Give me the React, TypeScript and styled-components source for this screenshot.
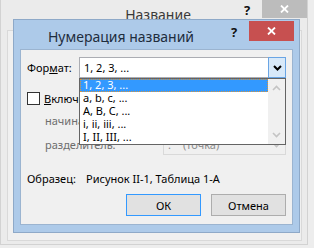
import React from 'react';
import styled, { createGlobalStyle } from 'styled-components';

const GlobalStyle = createGlobalStyle`
  html, body {
    margin: 0;
    padding: 0;
    background: #ededed;
  }
  * {
    box-sizing: border-box;
  }
`;

const Desktop = styled.div`
  position: relative;
  width: 314px;
  height: 248px;
  overflow: hidden;
  background: #ededed;
  font-family: 'Noto Sans', 'Open Sans', sans-serif;
  font-size: 11px;
  color: #000;
`;

// окно "Название" на заднем плане (неактивное)
const ParentWindow = styled.div`
  width: 308px;
  height: 245px;
  display: flex;
  flex-direction: column;
  background: #ebebeb;
  border: 1px solid #d2d2d2;
  border-top: none;
  padding: 0 5px 3px 6px;
`;

const ParentTitleBar = styled.div`
  height: 30px;
  display: grid;
  grid-template-columns: 1fr auto 1fr;
  margin: 0 -5px 0 -6px;
`;

const ParentTitle = styled.div`
  grid-column: 2;
  padding: 5px 0 0 8px;
  font-size: 14px;
  color: #3a3a3a;
`;

const CaptionButtons = styled.div`
  grid-column: 3;
  justify-self: end;
  display: flex;
  align-items: flex-start;
`;

const HelpButton = styled.div<{ $top: number }>`
  width: 30px;
  padding-top: ${p => p.$top}px;
  text-align: center;
  font-size: 13px;
  font-weight: 700;
  line-height: 13px;
  color: #111;
`;

const CloseButton = styled.div<{ $active?: boolean }>`
  width: 45px;
  height: ${p => (p.$active ? 20 : 18)}px;
  margin-top: ${p => (p.$active ? 1 : 0)}px;
  display: flex;
  align-items: center;
  justify-content: center;
  background: ${p => (p.$active ? '#c75050' : '#bcbcbc')};
`;

const ParentClient = styled.div`
  flex: 1;
  background: #f0f0f0;
  border: 1px solid #d9d9d9;
`;

// диалог "Нумерация названий"
const Dialog = styled.div`
  position: absolute;
  left: 13px;
  top: 19px;
  width: 287px;
  height: 214px;
  display: flex;
  flex-direction: column;
  background: #adcae9;
  border: 1px solid #8ea9c8;
  padding: 0 6px 7px;
`;

const DialogTitleBar = styled.div`
  height: 29px;
  display: flex;
  align-items: flex-start;
  margin: 0 -1px 0 -6px;
`;

const DialogTitle = styled.div`
  flex: 1;
  padding: 7px 0 0 9px;
  text-align: center;
  font-size: 14px;
  color: #1f2d3d;
  white-space: nowrap;
`;

const Client = styled.div`
  flex: 1;
  display: flex;
  flex-direction: column;
  background: #f0f0f0;
  border: 1px solid #9bb4d0;
  padding: 7px 6px 8px;
`;

const FieldRow = styled.div<{ $indent?: number; $mt?: number }>`
  display: flex;
  align-items: center;
  height: 21px;
  margin-top: ${p => p.$mt ?? 0}px;
  padding-left: ${p => p.$indent ?? 0}px;
`;

const Label = styled.div<{ $width?: number; $disabled?: boolean }>`
  width: ${p => (p.$width ? `${p.$width}px` : 'auto')};
  flex: ${p => (p.$width ? 'none' : '1')};
  color: ${p => (p.$disabled ? '#6d6d6d' : '#000')};
  white-space: nowrap;
`;

const Mnemonic = styled.span`
  text-decoration: underline;
`;

const Combo = styled.div<{ $width?: number }>`
  position: relative;
  height: 21px;
  display: flex;
  ${p => (p.$width ? `width: ${p.$width}px;` : 'flex: 1;')}
`;

const ComboText = styled.div<{ $disabled?: boolean }>`
  flex: 1;
  display: flex;
  align-items: center;
  padding-left: 4px;
  gap: 12px;
  background: ${p => (p.$disabled ? '#f0f0f0' : '#fff')};
  color: ${p => (p.$disabled ? '#8d8d8d' : '#000')};
  border: 1px solid ${p => (p.$disabled ? '#d9d9d9' : '#abadb3')};
  border-right: none;
  white-space: nowrap;
  overflow: hidden;
`;

const ComboButton = styled.div<{ $hot?: boolean }>`
  width: 18px;
  display: flex;
  align-items: center;
  justify-content: center;
  background: ${p => (p.$hot ? '#d8e9f9' : '#f0f0f0')};
  border: 1px solid ${p => (p.$hot ? '#6aa5e4' : '#d9d9d9')};
  ${p => (p.$hot ? '' : 'border-left: none;')}
`;

const DropList = styled.div`
  position: absolute;
  top: 100%;
  left: 0;
  right: 0;
  height: 67px;
  display: flex;
  background: #fff;
  border: 1px solid #646464;
  z-index: 2;
`;

const ListItems = styled.div`
  flex: 1;
  display: flex;
  flex-direction: column;
`;

const ListItem = styled.div<{ $selected?: boolean }>`
  height: 13px;
  line-height: 12px;
  padding-left: 3px;
  white-space: nowrap;
  color: ${p => (p.$selected ? '#fff' : '#000')};
  background: ${p => (p.$selected ? '#3399ff' : 'transparent')};
  outline: ${p => (p.$selected ? '1px dotted #d8953d' : 'none')};
  outline-offset: -1px;
`;

const ScrollBar = styled.div`
  width: 17px;
  display: flex;
  flex-direction: column;
  justify-content: space-between;
  align-items: center;
  background: #f0f0f0;
  padding: 6px 0 6px;
`;

const CheckRow = styled.div`
  display: flex;
  align-items: center;
  gap: 4px;
  height: 13px;
  margin-top: 14px;
`;

const CheckBox = styled.div`
  width: 13px;
  height: 13px;
  background: #fff;
  border: 1px solid #333;
`;

const SampleRow = styled.div`
  display: flex;
  align-items: center;
  height: 16px;
  margin-top: 15px;
`;

const ButtonRow = styled.div`
  display: flex;
  justify-content: flex-end;
  gap: 10px;
  margin-top: auto;
`;

const DialogButton = styled.div<{ $default?: boolean }>`
  width: 75px;
  height: 22px;
  display: flex;
  align-items: center;
  justify-content: center;
  background: #e1e1e1;
  border: 1px solid ${p => (p.$default ? '#3399ff' : '#adadad')};
`;

const CloseGlyph = () => (
  <svg width="9" height="8" viewBox="0 0 9 8">
    <path d="M1 0.5 L8 7.5 M8 0.5 L1 7.5" stroke="#fff" strokeWidth="1.8" fill="none" />
  </svg>
);

const Chevron = ({ up, color, weight }: { up?: boolean; color: string; weight: number }) => (
  <svg width="9" height="6" viewBox="0 0 9 6">
    <path
      d={up ? 'M1 5 L4.5 1.5 L8 5' : 'M1 1 L4.5 4.5 L8 1'}
      fill="none"
      stroke={color}
      strokeWidth={weight}
    />
  </svg>
);

const formats = ['1, 2, 3, ...', 'a, b, c, ...', 'A, B, C, ...', 'i, ii, iii, ...', 'I, II, III, ...'];

export default function App() {
  return (
    <Desktop>
      <GlobalStyle />
      <ParentWindow>
        <ParentTitleBar>
          <ParentTitle>Название</ParentTitle>
          <CaptionButtons>
            <HelpButton $top={4}>?</HelpButton>
            <CloseButton>
              <CloseGlyph />
            </CloseButton>
          </CaptionButtons>
        </ParentTitleBar>
        <ParentClient />
      </ParentWindow>

      <Dialog>
        <DialogTitleBar>
          <DialogTitle>Нумерация названий</DialogTitle>
          <HelpButton $top={6}>?</HelpButton>
          <CloseButton $active>
            <CloseGlyph />
          </CloseButton>
        </DialogTitleBar>

        <Client>
          <FieldRow>
            <Label $width={52}>
              Фор<Mnemonic>м</Mnemonic>ат:
            </Label>
            <Combo>
              <ComboText>1, 2, 3, ...</ComboText>
              <ComboButton $hot>
                <Chevron color="#000" weight={2} />
              </ComboButton>
              <DropList>
                <ListItems>
                  {formats.map((f, i) => (
                    <ListItem key={f} $selected={i === 0}>
                      {f}
                    </ListItem>
                  ))}
                </ListItems>
                <ScrollBar>
                  <Chevron up color="#c4c4c4" weight={1.6} />
                  <Chevron color="#c4c4c4" weight={1.6} />
                </ScrollBar>
              </DropList>
            </Combo>
          </FieldRow>

          <CheckRow>
            <CheckBox />
            <Label>
              <Mnemonic>В</Mnemonic>ключить номер главы
            </Label>
          </CheckRow>

          <FieldRow $indent={18} $mt={5}>
            <Label $disabled>начинается со стиля:</Label>
            <Combo $width={123}>
              <ComboText $disabled>Заголовок 1</ComboText>
              <ComboButton>
                <Chevron color="#c4c4c4" weight={1.6} />
              </ComboButton>
            </Combo>
          </FieldRow>

          <FieldRow $indent={18} $mt={3}>
            <Label $disabled>разделитель:</Label>
            <Combo $width={123}>
              <ComboText $disabled>
                <span>.</span>
                <span>(точка)</span>
              </ComboText>
              <ComboButton>
                <Chevron color="#c4c4c4" weight={1.6} />
              </ComboButton>
            </Combo>
          </FieldRow>

          <SampleRow>
            <Label $width={59}>Образец:</Label>
            <Label>Рисунок II-1, Таблица 1-А</Label>
          </SampleRow>

          <ButtonRow>
            <DialogButton $default>ОК</DialogButton>
            <DialogButton>Отмена</DialogButton>
          </ButtonRow>
        </Client>
      </Dialog>
    </Desktop>
  );
}
